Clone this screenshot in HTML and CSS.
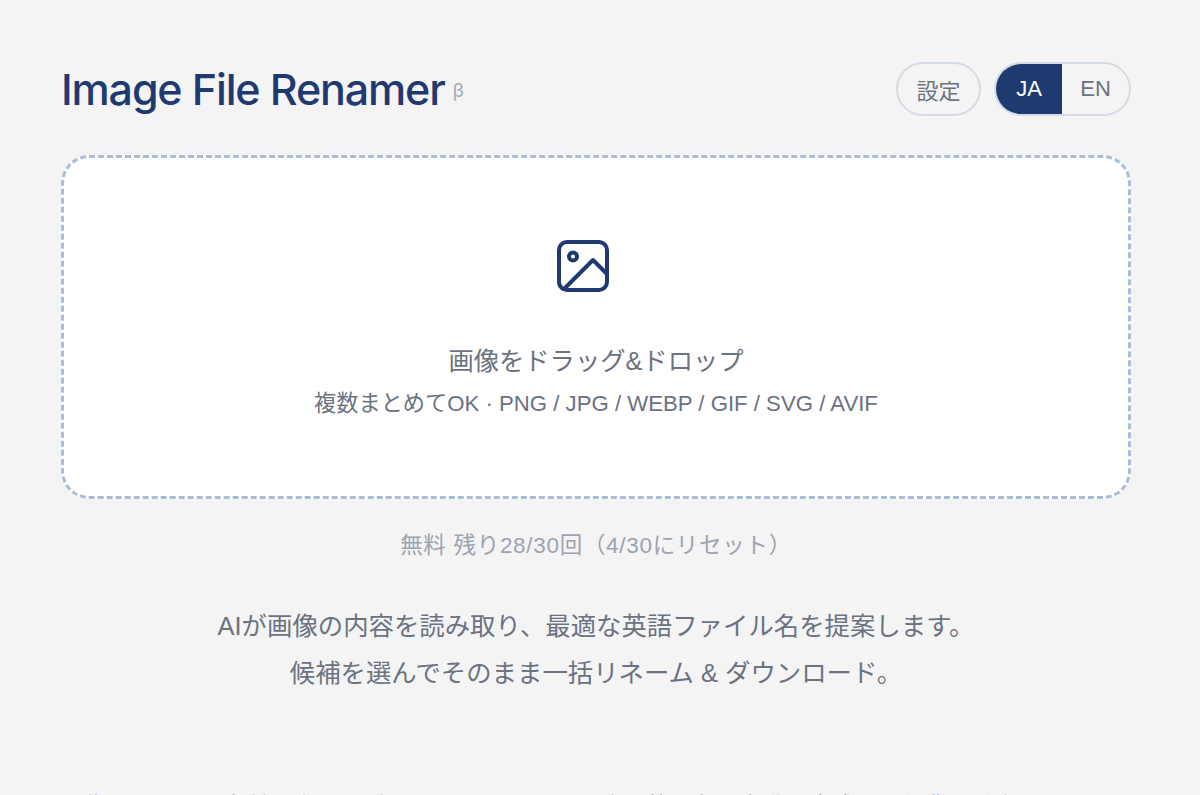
FILE: index.html
```html
<!DOCTYPE html>
<html lang="ja">

<head>
	<meta charset="utf-8">
	<meta name="viewport" content="width=device-width, initial-scale=1">
	<title>Image File Renamer</title>
	<link rel="stylesheet" href="styles.css">
</head>

<body>

	<main class="page">

		<header class="header">
			<h1 class="logo">Image File Renamer<sup class="logo-badge">β</sup></h1>
			<div class="header-actions">
				<button type="button" class="pill-button">設定</button>
				<div class="lang-switch">
					<button type="button" class="lang-option lang-option-active">JA</button>
					<button type="button" class="lang-option">EN</button>
				</div>
			</div>
		</header>

		<section class="dropzone">
			<svg class="dropzone-icon" viewBox="0 0 52 52" fill="none" stroke="currentColor" stroke-width="4" stroke-linecap="round" stroke-linejoin="round">
				<rect x="2" y="2" width="48" height="48" rx="8"></rect>
				<circle cx="16" cy="16.500" r="4"></circle>
				<path d="M7 49 L36 20 L50 34"></path>
			</svg>
			<p class="dropzone-title">画像をドラッグ&amp;ドロップ</p>
			<p class="dropzone-note">複数まとめてOK · PNG / JPG / WEBP / GIF / SVG / AVIF</p>
		</section>

		<p class="quota">無料 残り28/30回（4/30にリセット）</p>

		<div class="lead">
			<p>AIが画像の内容を読み取り、最適な英語ファイル名を提案します。</p>
			<p>候補を選んでそのまま一括リネーム &amp; ダウンロード。</p>
		</div>

		<p class="description">画像ファイルの名前を考える手間をなくし、SEOに強い英語名を自動で生成して作業を効率化します。</p>

	</main>

</body>
</html>
```

FILE: styles.css
```css
* {
	box-sizing: border-box;
}

html,
body {
	height: 100%;
	overflow: hidden;
}

body {
	margin: 0;
	background: #f4f4f5;
	color: #6b7280;
	font-family: "Liberation Sans", "Noto Sans CJK JP", sans-serif;
}

p {
	margin: 0;
}

.page {
	padding: 62px 69px 0 61px;
}

.header {
	display: flex;
	align-items: center;
	justify-content: space-between;
	height: 54px;
	margin-bottom: 39px;
}

.logo {
	margin: 0;
	color: #1e3a70;
	font-family: "Inter", sans-serif;
	font-size: 43px;
	font-weight: 550;
	letter-spacing: -1.150px;
	line-height: 54px;
}

.logo-badge {
	margin-left: 8px;
	color: #a3a9b4;
	font-size: 19px;
	font-weight: 400;
	letter-spacing: 0;
	line-height: 0;
	vertical-align: 8px;
}

.header-actions {
	display: flex;
	align-items: center;
	gap: 13px;
}

.pill-button {
	width: 85px;
	height: 54px;
	padding: 0;
	border: 2px solid #d5dbe6;
	border-radius: 27px;
	background: transparent;
	color: #6b7280;
	font: 400 22px "Liberation Sans", "Noto Sans CJK JP", sans-serif;
}

.lang-switch {
	display: flex;
	width: 137px;
	height: 54px;
	border: 2px solid #d5dbe6;
	border-radius: 27px;
	overflow: hidden;
}

.lang-option {
	flex: 1;
	padding: 0;
	border: 0;
	background: transparent;
	color: #6b7280;
	font: 400 22px "Liberation Sans", "Noto Sans CJK JP", sans-serif;
}

.lang-option-active {
	flex: none;
	width: 66px;
	background: #1e3a70;
	color: #fff;
}

.dropzone {
	display: flex;
	flex-direction: column;
	align-items: center;
	height: 344px;
	padding-top: 82px;
	border: 3px dashed #a9bdd9;
	border-radius: 28px;
	background: #fff;
}

.dropzone-icon {
	width: 52px;
	height: 52px;
	margin-right: 27px;
	color: #1e3a70;
}

.dropzone-title {
	margin-top: 51px;
	font-size: 25.300px;
	line-height: 36px;
}

.dropzone-note {
	margin-top: 9px;
	font-size: 22.200px;
	line-height: 32px;
}

.quota {
	margin-top: 31px;
	color: #9ca3af;
	font-size: 22.500px;
	letter-spacing: 0.700px;
	line-height: 32px;
	text-align: center;
}

.lead {
	margin-top: 41px;
	font-size: 25.400px;
	line-height: 47px;
	text-align: center;
}

.description {
	margin-top: 93px;
	font-size: 23.300px;
	line-height: 34px;
	text-align: center;
	white-space: nowrap;
}
```
